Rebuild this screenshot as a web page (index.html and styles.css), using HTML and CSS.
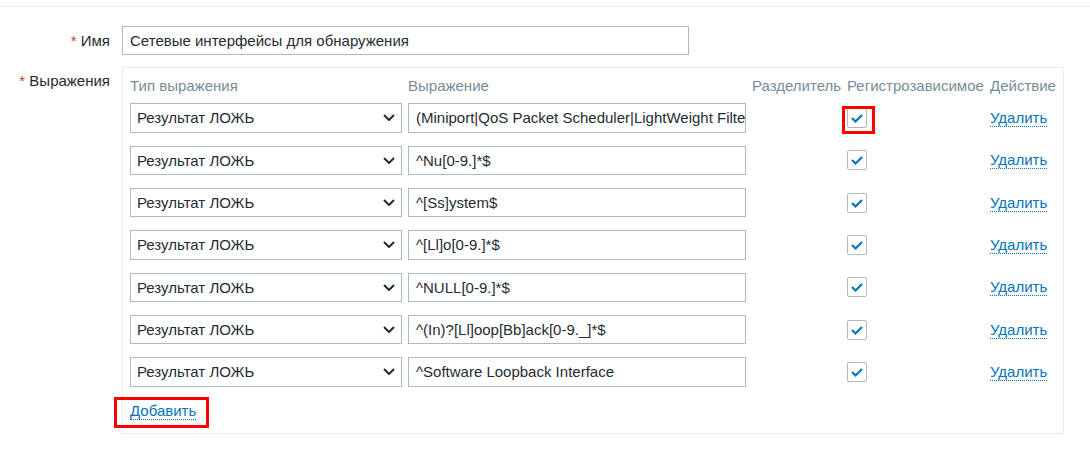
FILE: index.html
```html
<!DOCTYPE html>
<html lang="ru">
<head>
<meta charset="utf-8">
<link rel="stylesheet" href="styles.css">
</head>
<body>
<div class="page">
  <div class="topline"></div>
  <div class="form">
    <div class="label"><span class="req">*</span> Имя</div>
    <div class="field">
      <div class="text-input name-input">Сетевые интерфейсы для обнаружения</div>
    </div>

    <div class="label label-expr"><span class="req">*</span> Выражения</div>
    <div class="field">
      <div class="expr-box">
        <div class="cols thead">
          <div class="th">Тип выражения</div>
          <div class="th">Выражение</div>
          <div class="th">Разделитель</div>
          <div class="th">Регистрозависимое</div>
          <div class="th">Действие</div>
        </div>
        <div class="cols tbody">
          <div class="select">Результат ЛОЖЬ<svg class="chev" width="12" height="7" viewBox="0 0 12 7"><polyline points="1,1 6,6 11,1" fill="none" stroke="#1f2c33" stroke-width="2"/></svg></div>
          <div class="text-input">(Miniport|QoS Packet Scheduler|LightWeight Filter)</div>
          <div class="cell"></div>
          <div class="cell"><span class="cb"><svg width="20" height="20" viewBox="0 0 20 20"><polyline points="5,10 8.5,13.5 15,7" fill="none" stroke="#0275b8" stroke-width="2.2"/></svg><span class="red red-cb"></span></span></div>
          <div class="cell"><a class="link">Удалить</a></div>

          <div class="select">Результат ЛОЖЬ<svg class="chev" width="12" height="7" viewBox="0 0 12 7"><polyline points="1,1 6,6 11,1" fill="none" stroke="#1f2c33" stroke-width="2"/></svg></div>
          <div class="text-input">^Nu[0-9.]*$</div>
          <div class="cell"></div>
          <div class="cell"><span class="cb"><svg width="20" height="20" viewBox="0 0 20 20"><polyline points="5,10 8.5,13.5 15,7" fill="none" stroke="#0275b8" stroke-width="2.2"/></svg></span></div>
          <div class="cell"><a class="link">Удалить</a></div>

          <div class="select">Результат ЛОЖЬ<svg class="chev" width="12" height="7" viewBox="0 0 12 7"><polyline points="1,1 6,6 11,1" fill="none" stroke="#1f2c33" stroke-width="2"/></svg></div>
          <div class="text-input">^[Ss]ystem$</div>
          <div class="cell"></div>
          <div class="cell"><span class="cb"><svg width="20" height="20" viewBox="0 0 20 20"><polyline points="5,10 8.5,13.5 15,7" fill="none" stroke="#0275b8" stroke-width="2.2"/></svg></span></div>
          <div class="cell"><a class="link">Удалить</a></div>

          <div class="select">Результат ЛОЖЬ<svg class="chev" width="12" height="7" viewBox="0 0 12 7"><polyline points="1,1 6,6 11,1" fill="none" stroke="#1f2c33" stroke-width="2"/></svg></div>
          <div class="text-input">^[Ll]o[0-9.]*$</div>
          <div class="cell"></div>
          <div class="cell"><span class="cb"><svg width="20" height="20" viewBox="0 0 20 20"><polyline points="5,10 8.5,13.5 15,7" fill="none" stroke="#0275b8" stroke-width="2.2"/></svg></span></div>
          <div class="cell"><a class="link">Удалить</a></div>

          <div class="select">Результат ЛОЖЬ<svg class="chev" width="12" height="7" viewBox="0 0 12 7"><polyline points="1,1 6,6 11,1" fill="none" stroke="#1f2c33" stroke-width="2"/></svg></div>
          <div class="text-input">^NULL[0-9.]*$</div>
          <div class="cell"></div>
          <div class="cell"><span class="cb"><svg width="20" height="20" viewBox="0 0 20 20"><polyline points="5,10 8.5,13.5 15,7" fill="none" stroke="#0275b8" stroke-width="2.2"/></svg></span></div>
          <div class="cell"><a class="link">Удалить</a></div>

          <div class="select">Результат ЛОЖЬ<svg class="chev" width="12" height="7" viewBox="0 0 12 7"><polyline points="1,1 6,6 11,1" fill="none" stroke="#1f2c33" stroke-width="2"/></svg></div>
          <div class="text-input">^(In)?[Ll]oop[Bb]ack[0-9._]*$</div>
          <div class="cell"></div>
          <div class="cell"><span class="cb"><svg width="20" height="20" viewBox="0 0 20 20"><polyline points="5,10 8.5,13.5 15,7" fill="none" stroke="#0275b8" stroke-width="2.2"/></svg></span></div>
          <div class="cell"><a class="link">Удалить</a></div>

          <div class="select">Результат ЛОЖЬ<svg class="chev" width="12" height="7" viewBox="0 0 12 7"><polyline points="1,1 6,6 11,1" fill="none" stroke="#1f2c33" stroke-width="2"/></svg></div>
          <div class="text-input">^Software Loopback Interface</div>
          <div class="cell"></div>
          <div class="cell"><span class="cb"><svg width="20" height="20" viewBox="0 0 20 20"><polyline points="5,10 8.5,13.5 15,7" fill="none" stroke="#0275b8" stroke-width="2.2"/></svg></span></div>
          <div class="cell"><a class="link">Удалить</a></div>
        </div>
        <div class="add-row"><a class="link add">Добавить<span class="red red-add"></span></a></div>
      </div>
    </div>
  </div>
</div>
</body>
</html>
```

FILE: styles.css
```css
* { box-sizing: border-box; }
html, body { margin: 0; padding: 0; background: #fff; }
body {
  font-family: "Liberation Sans", Arial, sans-serif;
  font-size: 15px;
  color: #1f2c33;
  width: 1090px;
  height: 450px;
  overflow: hidden;
}
.topline {
  margin-top: 6px;
  border-top: 1px solid #ebeef0;
  width: 1090px;
}
.form {
  display: grid;
  grid-template-columns: 110px 941px;
  column-gap: 12px;
  row-gap: 12px;
  padding-top: 19px;
}
.label {
  text-align: right;
  line-height: 29px;
  height: 29px;
}
.label-expr { line-height: 20px; padding-top: 4px; }
.req { color: #e33734; }
.text-input {
  height: 29.33px;
  border: 1px solid #acbbc2;
  padding: 0 7px;
  line-height: 27px;
  white-space: nowrap;
  overflow: hidden;
  background: #fff;
}
.name-input { width: 567px; }
.expr-box {
  border: 1px solid #ebeef0;
  padding: 8px 6px 12px 7px;
  width: 942px;
}
.cols {
  display: grid;
  grid-template-columns: 272px 338px 89px 137px 66px;
  column-gap: 6px;
}
.thead {
  height: 20px;
  margin-bottom: 7px;
}
.tbody {
  row-gap: 13px;
  grid-auto-rows: 29.33px;
}
.th {
  color: #768d99;
  line-height: 20px;
  white-space: nowrap;
}
.select {
  height: 29.33px;
  border: 1px solid #acbbc2;
  padding: 0 6px;
  line-height: 27px;
  display: flex;
  justify-content: space-between;
  align-items: center;
}
.cell {
  display: flex;
  align-items: center;
}
.cb {
  position: relative;
  width: 20px;
  height: 20px;
  border: 1px solid #acbbc2;
  border-radius: 2px;
  display: flex;
  align-items: center;
  justify-content: center;
}
.cb svg { display: block; flex: none; }
.link {
  color: #0275b8;
  border-bottom: 1px dotted #0275b8;
  line-height: 17px;
  position: relative;
  cursor: pointer;
}
.add-row {
  padding-top: 14px;
  line-height: 20px;
}
.red {
  position: absolute;
  border: 3px solid #ff0000;
}
.red-cb {
  left: -6px;
  top: -3px;
  width: 33px;
  height: 28px;
}
.red-add {
  left: -16px;
  top: -5px;
  width: 95px;
  height: 31px;
}
```
